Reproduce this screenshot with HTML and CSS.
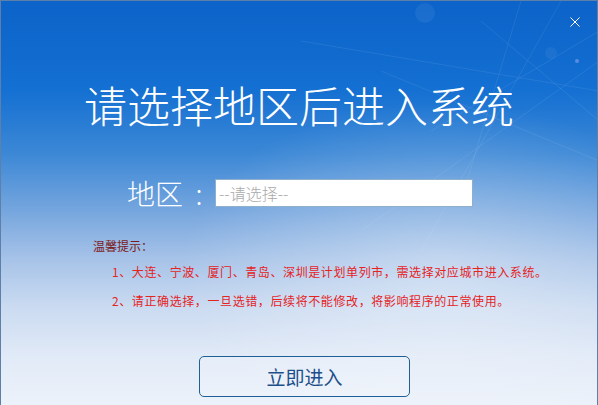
FILE: index.html
```html
<!DOCTYPE html>
<html lang="zh-CN">
<head>
<meta charset="utf-8">
<title>请选择地区后进入系统</title>
<link rel="stylesheet" href="styles.css">
</head>
<body>
<div class="window">
  <svg class="deco" width="598" height="260" viewBox="0 0 598 260" aria-hidden="true">
    <g stroke="#ffffff" stroke-opacity="0.08" stroke-width="1" fill="none">
      <path d="M420 250 L560 0"/>
      <path d="M360 230 L598 60"/>
      <path d="M480 20 L598 120"/>
      <path d="M300 40 L598 90"/>
      <path d="M520 0 L460 200"/>
      <path d="M380 70 L598 160"/>
      <path d="M598 30 L430 130"/>
    </g>
    <circle cx="424" cy="12" r="10" fill="#ffffff" fill-opacity="0.06"/>
    <circle cx="550" cy="52" r="6" fill="#ffffff" fill-opacity="0.05"/>
    <circle cx="576" cy="60" r="2" fill="#c8b8ff" fill-opacity="0.4"/>
  </svg>
  <button class="close" aria-label="关闭">
    <svg width="10" height="10" viewBox="0 0 10 10"><path d="M0.5 0.5 L9.5 9.5 M9.5 0.5 L0.5 9.5" stroke="#ffffff" stroke-width="1" fill="none"/></svg>
  </button>
  <h1 class="title">请选择地区后进入系统</h1>
  <div class="region-row">
    <span class="region-label">地区</span>
    <span class="region-colon">:</span>
    <div class="region-select">--请选择--</div>
  </div>
  <div class="tips">
    <div class="tips-head">温馨提示：</div>
    <p class="tip">1、大连、宁波、厦门、青岛、深圳是计划单列市，需选择对应城市进入系统。</p>
    <p class="tip">2、请正确选择，一旦选错，后续将不能修改，将影响程序的正常使用。</p>
  </div>
  <button class="enter">立即进入</button>
</div>
</body>
</html>
```

FILE: styles.css
```css
html, body {
  margin: 0;
  padding: 0;
}
body {
  width: 598px;
  height: 405px;
  overflow: hidden;
  font-family: "Noto Sans CJK SC", "Noto Sans", sans-serif;
}
.window {
  position: relative;
  box-sizing: border-box;
  width: 598px;
  height: 405px;
  border: 1px solid #5d7fa8;
  border-bottom: none;
  display: flex;
  flex-direction: column;
  overflow: hidden;
  background:
    radial-gradient(ellipse 260px 170px at 440px 270px, rgba(255,255,255,0.35), rgba(255,255,255,0) 100%),
    linear-gradient(180deg, #0c63c9 0%, #1470d2 22%, #3d88d6 38%, #76a6de 52%, #a7c3e8 64%, #cbdbf1 76%, #e1eaf7 88%, #ecf2fa 100%);
}
.deco {
  position: absolute;
  top: 0;
  left: 0;
}
.close {
  position: absolute;
  top: 15px;
  right: 16px;
  width: 12px;
  height: 12px;
  padding: 1px;
  border: none;
  background: none;
  display: flex;
  align-items: center;
  justify-content: center;
}
.title {
  position: relative;
  margin: 78px 0 0;
  text-align: center;
  color: #ffffff;
  font-size: 43px;
  line-height: 50px;
  font-weight: 300;
  letter-spacing: 0;
}
.region-row {
  position: relative;
  margin-top: 50px;
  display: flex;
  align-items: center;
  padding-left: 126px;
}
.region-label {
  color: #ffffff;
  font-size: 28px;
  line-height: 28px;
  font-weight: 300;
  white-space: nowrap;
}
.region-colon {
  color: #ffffff;
  font-size: 28px;
  line-height: 28px;
  font-weight: 300;
  width: 32px;
  text-align: center;
}
.region-select {
  box-sizing: border-box;
  width: 258px;
  height: 28px;
  background: #ffffff;
  border: 1px solid #8fb0cc;
  color: #a9a9a9;
  font-size: 16px;
  font-weight: 300;
  line-height: 26px;
  padding-left: 3px;
}
.tips {
  position: relative;
  margin-top: 31px;
  padding-left: 92px;
}
.tips-head {
  color: #7d1a20;
  font-size: 12px;
  line-height: 16px;
}
.tip {
  margin: 0;
  padding-left: 19px;
  color: #e5231f;
  font-size: 12px;
  line-height: 29px;
  letter-spacing: 0.6px;
}
.tip:first-of-type {
  margin-top: 3px;
}
.enter {
  position: relative;
  align-self: flex-start;
  margin: 41px 0 0 198px;
  box-sizing: border-box;
  width: 211px;
  height: 41px;
  border: 1px solid #1f5f98;
  border-radius: 5px;
  background: rgba(255,255,255,0.15);
  color: #1d4f8a;
  font-family: "Noto Sans CJK SC", "Noto Sans", sans-serif;
  font-size: 19px;
  line-height: 39px;
  padding: 0;
}
```
